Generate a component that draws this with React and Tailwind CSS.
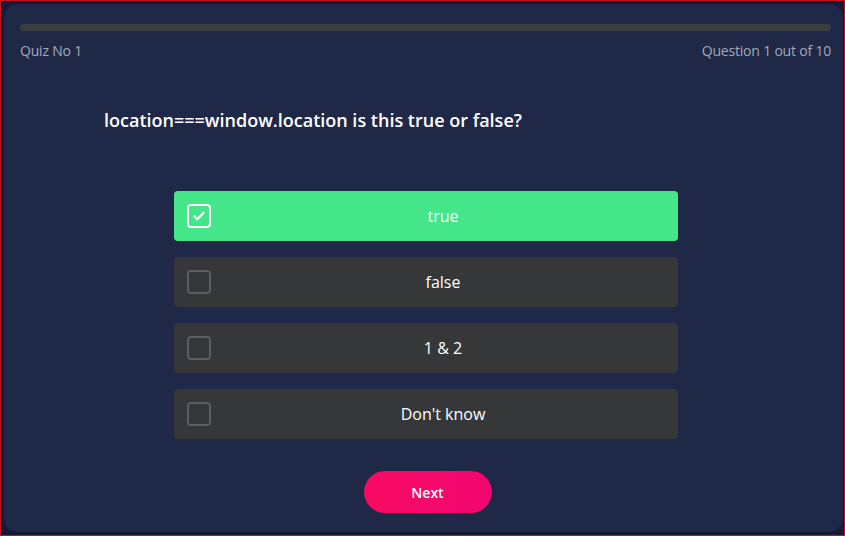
const options = ['true', 'false', '1 & 2', "Don't know"]

function CheckBox({ checked }) {
  return (
    <div
      className={
        'w-6 h-6 rounded-[4px] border-2 flex items-center justify-center ' +
        (checked ? 'border-white' : 'border-[#5b5e60]')
      }
    >
      {checked && (
        <svg width="14" height="14" viewBox="0 0 24 24" fill="none" stroke="white" strokeWidth="4" strokeLinecap="round" strokeLinejoin="round">
          <path d="M4 12.5l5 5L20 6.5" />
        </svg>
      )}
    </div>
  )
}

export default function App() {
  const selected = 0

  return (
    <div
      className="w-[845px] h-[536px] border border-[#c4111d] bg-[#121a35] pl-[3px] pr-[1px] py-[3px]"
      style={{ fontFamily: '"Open Sans", "Liberation Sans", sans-serif' }}
    >
      <div className="h-full rounded-[14px] bg-[#1f2847] pl-4 pr-[12px] pt-[20px]">
        <div className="h-[7px] rounded-full bg-[#3a3e3f]" />
        <div className="flex justify-between mt-[9px] text-[14px] text-[#a3a8b6] tracking-[-0.2px]">
          <span>Quiz No 1</span>
          <span>Question 1 out of 10</span>
        </div>

        <h1 className="ml-[84px] mt-[46px] text-[18px] font-semibold text-white">
          location===window.location is this true or false?
        </h1>

        <div className="mt-[57px] flex flex-col items-center gap-4">
          {options.map((opt, i) => (
            <div
              key={opt}
              className={
                'w-[504px] h-[50px] rounded-[4px] flex items-center pl-[13px] pr-[2px] ' +
                (i === selected ? 'bg-[#45e68a]' : 'bg-[#353738]')
              }
            >
              <CheckBox checked={i === selected} />
              <span className="flex-1 text-center text-[16px] text-white">{opt}</span>
            </div>
          ))}
        </div>

        <div className="flex justify-center mt-[32px]">
          <button className="w-[128px] h-[42px] ml-[4px] rounded-full bg-gradient-to-r from-[#f80a63] to-[#f0066f] text-white text-[14px] font-semibold">
            Next
          </button>
        </div>
      </div>
    </div>
  )
}
